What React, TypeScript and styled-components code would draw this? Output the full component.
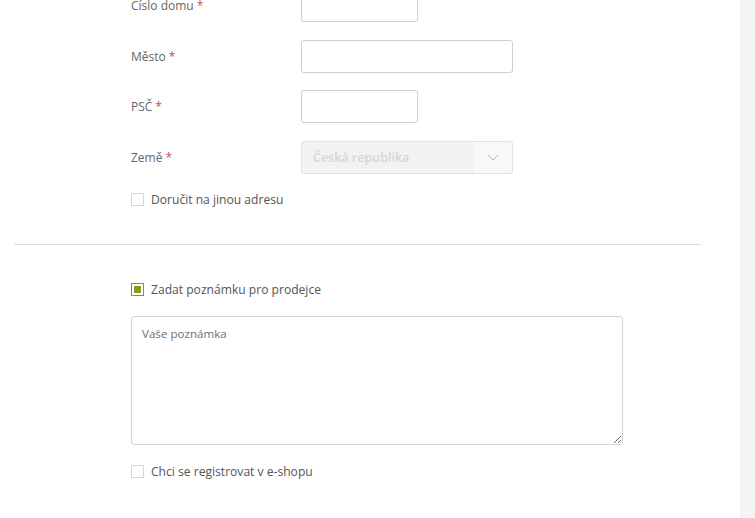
import React from "react";
import styled, { createGlobalStyle } from "styled-components";

const Global = createGlobalStyle`
  html, body { margin: 0; padding: 0; background: #fff; }
  body { font-family: "Open Sans", "Liberation Sans", sans-serif; color: #555; overflow: hidden; }
  * { box-sizing: border-box; }
`;

const Page = styled.div`
  display: flex;
  width: 755px;
  height: 518px;
  overflow: hidden;
`;

const Main = styled.main`
  flex: 1;
  padding-left: 14px;
`;

const Sidebar = styled.aside`
  width: 15px;
  background: #f4f4f4;
`;

const Section = styled.section`
  width: 687px;
  padding-left: 117px;
`;

const TopSection = styled(Section)`
  margin-top: -11px;
  padding-bottom: 37px;
  border-bottom: 1px solid #dcdcdc;
`;

const BottomSection = styled(Section)`
  padding-top: 36px;
`;

const Row = styled.div`
  display: grid;
  grid-template-columns: 170px 1fr;
  align-items: center;
  height: 33px;
  margin-bottom: 17.5px;
`;

const Label = styled.label`
  font-size: 12px;
  color: #666;
`;

const Req = styled.span`
  color: #c0504d;
  margin-left: 3px;
`;

const Input = styled.input<{ $w: number }>`
  width: ${(p) => p.$w}px;
  height: 33px;
  border: 1px solid #cfcfcf;
  border-radius: 3px;
  background: #fff;
  font: inherit;
`;

const Select = styled.div`
  width: 212px;
  height: 33px;
  display: flex;
  border: 1px solid #e2e2e2;
  border-radius: 3px;
  background: #f2f2f2;
  overflow: hidden;
`;

const SelectValue = styled.span`
  flex: 1;
  padding-left: 11px;
  display: flex;
  align-items: center;
  font-size: 12.5px;
  font-weight: 600;
  color: #d6d6d6;
`;

const SelectArrow = styled.span`
  width: 38px;
  display: flex;
  align-items: center;
  justify-content: center;
  background: #f8f8f8;
`;

const CheckRow = styled.label<{ $mt?: number }>`
  display: flex;
  align-items: center;
  gap: 7px;
  margin-top: ${(p) => p.$mt ?? 0}px;
  font-size: 12.1px;
  color: #555;
  height: 16px;
`;

const Box = styled.span<{ $checked?: boolean }>`
  width: 13px;
  height: 13px;
  border: 1px solid ${(p) => (p.$checked ? "#8f9318" : "#d8d8d8")};
  background: #fff;
  display: flex;
  align-items: center;
  justify-content: center;
  &::after {
    content: "";
    width: 7px;
    height: 7px;
    background: ${(p) => (p.$checked ? "#8d9a12" : "transparent")};
  }
`;

const TextArea = styled.textarea`
  display: block;
  width: 492px;
  height: 129px;
  margin-top: 19px;
  margin-bottom: 18px;
  border: 1px solid #d4d4d4;
  border-radius: 3px;
  padding: 9px 10px;
  font-family: inherit;
  font-size: 11.6px;
  color: #555;
  resize: vertical;
  &::placeholder { color: #707070; }
`;

const Chevron = () => (
  <svg width="12" height="7" viewBox="0 0 12 7" fill="none">
    <path d="M1 1l5 5 5-5" stroke="#b5b5b5" strokeWidth="1" />
  </svg>
);

export default function App() {
  return (
    <>
      <Global />
      <Page>
        <Main>
          <TopSection>
            <Row>
              <Label>Číslo domu<Req>*</Req></Label>
              <Input $w={117} />
            </Row>
            <Row>
              <Label>Město<Req>*</Req></Label>
              <Input $w={212} />
            </Row>
            <Row>
              <Label>PSČ<Req>*</Req></Label>
              <Input $w={117} />
            </Row>
            <Row>
              <Label>Země<Req>*</Req></Label>
              <Select>
                <SelectValue>Česká republika</SelectValue>
                <SelectArrow><Chevron /></SelectArrow>
              </Select>
            </Row>
            <CheckRow $mt={4}>
              <Box />
              Doručit na jinou adresu
            </CheckRow>
          </TopSection>
          <BottomSection>
            <CheckRow>
              <Box $checked />
              Zadat poznámku pro prodejce
            </CheckRow>
            <TextArea placeholder="Vaše poznámka" />
            <CheckRow>
              <Box />
              Chci se registrovat v e-shopu
            </CheckRow>
          </BottomSection>
        </Main>
        <Sidebar />
      </Page>
    </>
  );
}
